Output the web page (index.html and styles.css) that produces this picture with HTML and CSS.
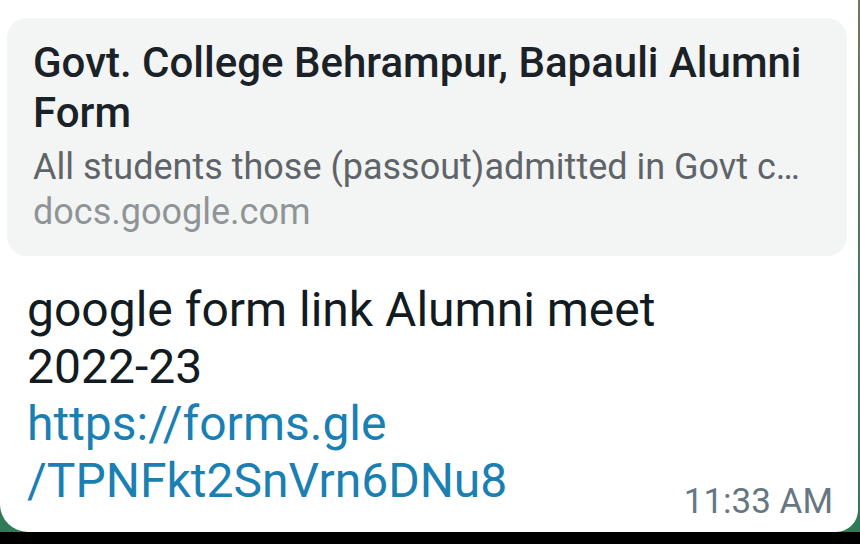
FILE: index.html
```html
<!DOCTYPE html>
<html>
<head>
<meta charset="utf-8">
<link rel="stylesheet" href="styles.css">
</head>
<body>
<div class="scene">
  <div class="bubble">
    <div class="preview">
      <div class="p-title">Govt. College Behrampur, Bapauli Alumni<br>Form</div>
      <div class="p-desc">All students those (passout)admitted in Govt c…</div>
      <div class="p-domain">docs.google.com</div>
    </div>
    <div class="body">
      <div class="msg">google form link Alumni meet<br>2022-23<br><a class="link" href="#">https://forms.gle<br>/TPNFkt2SnVrn6DNu8</a></div>
      <div class="time">11:33 AM</div>
    </div>
  </div>
</div>
<div class="bottom"></div>
</body>
</html>
```

FILE: styles.css
```css
html, body {
  margin: 0;
  padding: 0;
  width: 860px;
  height: 544px;
  overflow: hidden;
  background: #000;
  font-family: Roboto, "Noto Sans", sans-serif;
}
.scene {
  height: 532px;
  background: linear-gradient(180deg, #6f7a5a 0%, #3f7d5e 60%, #2f7a57 100%);
}
.bubble {
  width: 858px;
  height: 532px;
  box-sizing: border-box;
  background: #fff;
  border-radius: 0 0 22px 28px;
  padding: 18px 11px 0 7px;
}
.preview {
  background: #f3f4f4;
  border-radius: 20px;
  height: 238px;
  box-sizing: border-box;
  padding: 20px 14px 0 26px;
}
.p-title {
  font-weight: 500;
  font-size: 42px;
  line-height: 50px;
  color: #1b2227;
  white-space: nowrap;
}
.p-desc {
  margin-top: 8px;
  font-size: 36px;
  line-height: 42px;
  color: #5f6469;
  white-space: nowrap;
}
.p-domain {
  margin-top: 3px;
  font-size: 36px;
  line-height: 42px;
  color: #8f9497;
}
.body {
  display: flex;
  justify-content: space-between;
  align-items: flex-end;
  padding: 25px 14px 0 20px;
}
.msg {
  font-size: 48px;
  line-height: 57px;
  color: #111b21;
}
.link {
  color: #1a7fb2;
  text-decoration: none;
}
.time {
  font-size: 35px;
  line-height: 40px;
  color: #667781;
  margin-bottom: -13px;
}
.bottom {
  height: 12px;
  background: #000;
}
```
